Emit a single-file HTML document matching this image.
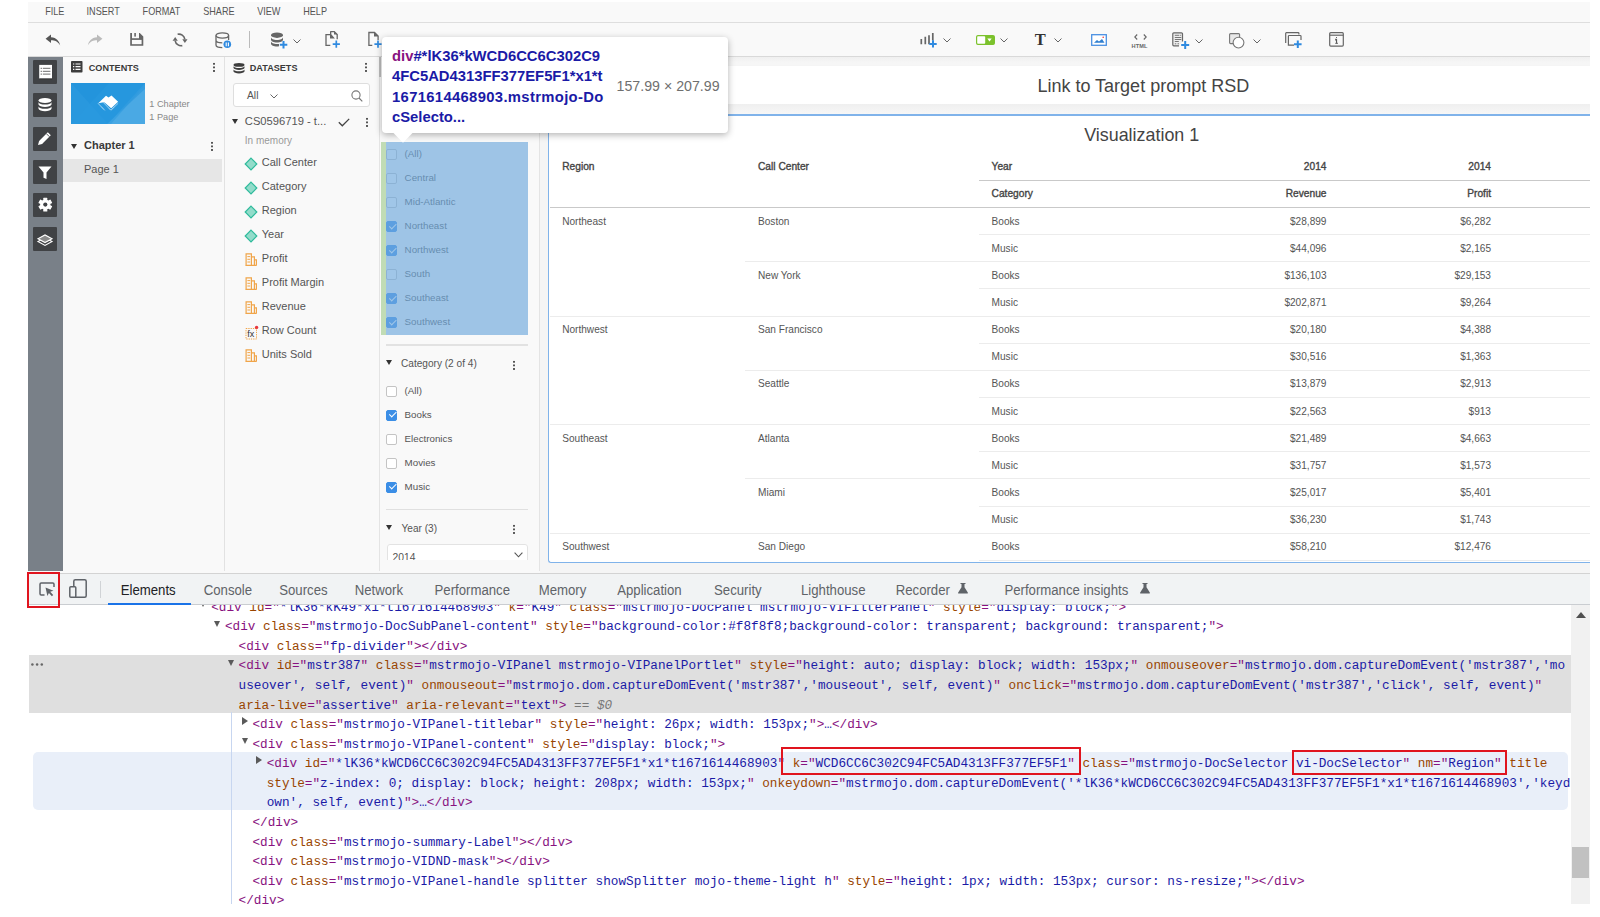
<!DOCTYPE html>
<html><head><meta charset="utf-8">
<style>
*{box-sizing:border-box}
html,body{margin:0;padding:0}
body{width:1600px;height:917px;position:relative;overflow:hidden;background:#fff;font-family:"Liberation Sans",sans-serif;color:#333}
.a{position:absolute}
#app{position:absolute;left:28px;top:2px;width:1562px;height:571px;background:#f9f9f9;overflow:hidden}
#menu{position:absolute;left:0;top:0;width:1562px;height:20px;background:#f9f9f9;border-bottom:1px solid #dcdcdc}
#menu span{position:absolute;top:5px;font-size:9px;color:#555;letter-spacing:0}
#tb{position:absolute;left:0;top:21px;width:1562px;height:33px;background:#f9f9f9;border-bottom:1px solid #d6d6d6}
#lbar{position:absolute;left:0;top:54px;width:35px;height:517px;background:#798088}
.lic{position:absolute;left:32.8px;width:24px;height:24px;background:#404245;border-radius:1px}
#contents{position:absolute;left:35px;top:54px;width:161px;height:517px;background:#f9f9f9;border-right:1px solid #e0e0e0}
#datasets{position:absolute;left:196px;top:54px;width:155px;height:517px;background:#f9f9f9;border-right:1px solid #e2e2e2}
#filter{position:absolute;left:351px;top:54px;width:160px;height:517px;background:#f9f9f9;border-right:1px solid #e6e6e6}
#canvas{position:absolute;left:511px;top:54px;width:1051px;height:517px;background:#f3f3f3}
.ph{position:absolute;font-size:9.1px;font-weight:bold;color:#3a3a3a;line-height:9px}
.kb{position:absolute;width:2px;height:10px;background:radial-gradient(circle,#555 0.95px,transparent 1.05px) 0 0/2px 3.6px}
.dsi{position:absolute;left:20px;font-size:11.3px;color:#444}
.fi{position:absolute;font-size:9.75px;color:#555;line-height:11px}
.cb{position:absolute;width:10.8px;height:10.8px;border:1px solid #c4c4c4;border-radius:2px;background:#fff}
.cb.on{background:#3b8ee6;border-color:#3b8ee6}
.cb.on:after{content:"";position:absolute;left:3.3px;top:-0.4px;width:2.6px;height:5.6px;border:solid #fff;border-width:0 1.3px 1.3px 0;transform:rotate(45deg)}
#devtabs{position:absolute;left:28px;top:573px;width:1562px;height:32px;z-index:2;background:#f1f3f4;border-top:1px solid #d3d3d3;border-bottom:1px solid #cacdd1}
#devtabs span{position:absolute;top:8.5px;font-size:13.2px;color:#5f6368;transform:scaleY(1.12);transform-origin:0 12px}
#code{position:absolute;left:28px;top:605px;width:1562px;height:300px;background:#fff;overflow:hidden}
.ln{position:absolute;left:0;height:19.4px;line-height:19.4px;white-space:pre;font-family:"Liberation Mono",monospace;font-size:12.71px;color:#1a1aa6}
.t{color:#881280}.n{color:#994500}.v{color:#1a1aa6}
.td{position:absolute;font-size:10.1px;color:#555;line-height:13px;white-space:nowrap}
.th{position:absolute;font-size:10.2px;font-weight:normal;-webkit-text-stroke:0.35px #444;color:#444;line-height:12px;white-space:nowrap}
.g{color:#777;font-style:italic}
.tri{position:absolute;width:0;height:0}
.tri.dn{border-left:3.9px solid transparent;border-right:3.9px solid transparent;border-top:6.2px solid #5a5a5a}
.tri.rt{border-top:4.1px solid transparent;border-bottom:4.1px solid transparent;border-left:6.2px solid #5a5a5a}
.mn{position:absolute;top:7.3px;font-size:9.1px;color:#555;line-height:10px;transform:scaleY(1.12);transform-origin:0 8.5px}
.lic svg{display:block}
</style></head><body>
<!--APP-->
<!-- frame -->
<div class="a" style="left:28px;top:2px;width:1562px;height:571px;background:#f9f9f9"></div>
<div class="a" style="left:28px;top:22px;width:1562px;height:1px;background:#dedede"></div>
<div class="a" style="left:28px;top:56px;width:1562px;height:1px;background:#d9d9d9"></div>
<!-- menu -->
<div class="mn" style="left:45.2px">FILE</div>
<div class="mn" style="left:86.6px">INSERT</div>
<div class="mn" style="left:142.6px">FORMAT</div>
<div class="mn" style="left:203.2px">SHARE</div>
<div class="mn" style="left:257.2px">VIEW</div>
<div class="mn" style="left:303.2px">HELP</div>
<!-- toolbar left -->
<svg class="a" style="left:45px;top:34px" width="16" height="12" viewBox="0 0 16 12"><path d="M6 0.5L0.6 4.8 6 9V6.3c3.8 0 6.8 1.2 9.2 5.2C14.4 7.2 11.6 3.6 6 3.2z" fill="#555"/></svg>
<svg class="a" style="left:87px;top:34px" width="16" height="12" viewBox="0 0 16 12"><path d="M10 0.5L15.4 4.8 10 9V6.3c-3.8 0-6.8 1.2-9.2 5.2C1.6 7.2 4.4 3.6 10 3.2z" fill="#bbb"/></svg>
<svg class="a" style="left:130px;top:33px" width="14" height="13" viewBox="0 0 14 13"><path d="M0.2 0H2V5.2H9V0H9.8L13.3 3.5V12.8H0.2z" fill="#666"/><rect x="4.3" y="0" width="1.6" height="3.6" fill="#666"/><rect x="1.9" y="6.9" width="9.7" height="4.3" fill="#f9f9f9"/></svg>
<svg class="a" style="left:172px;top:33px" width="16" height="14" viewBox="0 0 16 14"><path d="M5.6 1.3A6 6 0 0 1 12.8 6.2" fill="none" stroke="#666" stroke-width="1.6"/><path d="M10.3 6.2h5.2l-2.6 3.7z" fill="#666"/><path d="M10.3 12.6A6 6 0 0 1 3.2 7.8" fill="none" stroke="#666" stroke-width="1.6"/><path d="M0.6 7.8h5.2L3.2 4.1z" fill="#666"/></svg>
<svg class="a" style="left:215px;top:32px" width="17" height="17" viewBox="0 0 17 17"><ellipse cx="7.3" cy="3.5" rx="6.3" ry="2.6" fill="none" stroke="#666" stroke-width="1.3"/><path d="M1 3.5v9.5c0 1.4 2.8 2.6 6.3 2.6M13.6 3.5v4.5M1 8.2c0 1.4 2.8 2.6 6.3 2.6" fill="none" stroke="#666" stroke-width="1.3"/><circle cx="12.3" cy="12.3" r="3.8" fill="#2f8ae0"/><path d="M11.2 10.4v3.8M13.4 10.4v3.8" stroke="#fff" stroke-width="1.1"/></svg>
<div class="a" style="left:249px;top:31px;width:1px;height:17px;background:#bbb"></div>
<svg class="a" style="left:270px;top:32px" width="18" height="17" viewBox="0 0 18 17"><ellipse cx="7" cy="3.2" rx="6" ry="2.7" fill="#666"/><path d="M1 5.3c0 1.5 2.7 2.7 6 2.7s6-1.2 6-2.7v2.4c0 1.5-2.7 2.7-6 2.7s-6-1.2-6-2.7zM1 9.3c0 1.5 2.7 2.7 6 2.7 0.7 0 1.4 0 2-.1v2.4c-.6.1-1.3.2-2 .2-3.3 0-6-1.2-6-2.7z" fill="#666"/><path d="M13.5 9v7.5M9.8 12.7h7.5" stroke="#2f8ae0" stroke-width="2"/></svg>
<svg class="a" style="left:293px;top:38.5px" width="8" height="5" viewBox="0 0 8 5"><path d="M0.5 0.5L4 4 7.5 0.5" fill="none" stroke="#666" stroke-width="1"/></svg>
<svg class="a" style="left:325px;top:31px" width="16" height="18" viewBox="0 0 16 18"><path d="M5.3 14.4H1V3.6h4" fill="none" stroke="#666" stroke-width="1.3"/><path d="M5.6 0.6h3.6l3 3v4.6" fill="none" stroke="#666" stroke-width="1.3"/><path d="M5 0.3h1.3v3l3.6 4.2H5z" fill="#666"/><path d="M9 0.3l3.3 3.3H9z" fill="#666"/><path d="M11.3 9.6v7.2M7.7 13.2h7.2" stroke="#2f8ae0" stroke-width="1.7"/></svg>
<svg class="a" style="left:368px;top:31px" width="16" height="18" viewBox="0 0 16 18"><path d="M4.3 14.4H0.9V1.5h5.6l3.6 3.6v4" fill="none" stroke="#666" stroke-width="1.3"/><path d="M6 1.2l4.4 4.4H6z" fill="#666"/><path d="M10 9.6v7.2M6.4 13.2h7.2" stroke="#2f8ae0" stroke-width="1.7"/></svg>
<!-- toolbar right -->
<svg class="a" style="left:920px;top:33px" width="21" height="15" viewBox="0 0 21 15"><path d="M1.3 6v5.2M5.3 3.8v7.4M9 2.2v9M12.8 0v7.5" stroke="#666" stroke-width="1.7"/><path d="M13 7.2v7.4M9.3 10.9h7.4" stroke="#2f8ae0" stroke-width="2"/></svg>
<svg class="a" style="left:942.5px;top:37.5px" width="8" height="5" viewBox="0 0 8 5"><path d="M0.5 0.5L4 4 7.5 0.5" fill="none" stroke="#666" stroke-width="1"/></svg>
<svg class="a" style="left:976px;top:35px" width="19" height="10" viewBox="0 0 19 10"><rect x="0.6" y="0.6" width="17.8" height="8.8" rx="1.5" fill="#7cc22d" stroke="#7cc22d" stroke-width="1.2"/><rect x="1.2" y="1.2" width="8" height="7.6" rx="0.8" fill="#fff"/><path d="M11.3 3.6h4.4L13.5 6.4z" fill="#fff"/></svg>
<svg class="a" style="left:999.5px;top:37.5px" width="8" height="5" viewBox="0 0 8 5"><path d="M0.5 0.5L4 4 7.5 0.5" fill="none" stroke="#666" stroke-width="1"/></svg>
<div class="a" style="left:1034.7px;top:31px;font-family:'Liberation Serif',serif;font-size:16.5px;font-weight:bold;color:#333;line-height:18px">T</div>
<svg class="a" style="left:1054px;top:37.5px" width="8" height="5" viewBox="0 0 8 5"><path d="M0.5 0.5L4 4 7.5 0.5" fill="none" stroke="#666" stroke-width="1"/></svg>
<svg class="a" style="left:1090.5px;top:33.5px" width="16" height="12" viewBox="0 0 16 12"><rect x="0.7" y="0.7" width="14.6" height="10.6" fill="#fff" stroke="#4a90e2" stroke-width="1.3"/><path d="M3 8.8l3-2.8 2 1.5 3-2.5 2.5 3.8z" fill="#2f7fd0"/><circle cx="12.2" cy="3.2" r="0.8" fill="#e33"/></svg>
<svg class="a" style="left:1133.5px;top:34px" width="13" height="6" viewBox="0 0 13 6"><path d="M3.2 0.5L0.8 3 3.2 5.5M9.8 0.5L12.2 3 9.8 5.5" fill="none" stroke="#666" stroke-width="1.1"/></svg>
<div class="a" style="left:1131.5px;top:42.5px;font-size:5.6px;font-weight:bold;color:#666;line-height:6px;letter-spacing:0.1px">HTML</div>
<svg class="a" style="left:1172px;top:32px" width="18" height="17" viewBox="0 0 18 17"><path d="M10.5 9.5V1.8c0-.6-.4-1-1-1H1.8c-.6 0-1 .4-1 1v11c0 .6.4 1 1 1H7" fill="#eee" stroke="#666" stroke-width="1.2"/><path d="M2.8 3.3h4.5M8.2 3.3h1M2.8 5.5h6.5M2.8 7.5h6.5M2.8 9.5h4M2.8 11.8h1.5M5.5 11.8h1.5" stroke="#777" stroke-width="1"/><path d="M13.2 9v8M9.2 13h8" stroke="#2f8ae0" stroke-width="2"/></svg>
<svg class="a" style="left:1195px;top:38.5px" width="8" height="5" viewBox="0 0 8 5"><path d="M0.5 0.5L4 4 7.5 0.5" fill="none" stroke="#666" stroke-width="1"/></svg>
<svg class="a" style="left:1228.5px;top:32.5px" width="16" height="16" viewBox="0 0 16 16"><rect x="0.6" y="0.6" width="10" height="10" rx="1" fill="#e8e8e8" stroke="#777" stroke-width="1.1"/><circle cx="9.5" cy="9.6" r="5.4" fill="#fff" stroke="#777" stroke-width="1.1"/></svg>
<svg class="a" style="left:1252.5px;top:38.5px" width="8" height="5" viewBox="0 0 8 5"><path d="M0.5 0.5L4 4 7.5 0.5" fill="none" stroke="#666" stroke-width="1"/></svg>
<svg class="a" style="left:1285px;top:32px" width="18" height="16" viewBox="0 0 18 16"><path d="M0.7 11V1.4c0-.4.3-.7.7-.7h11.8c.4 0 .7.3.7.7v1" fill="none" stroke="#666" stroke-width="1.2"/><path d="M9 13.2H3.4V4.2c0-.4.3-.7.7-.7h11.2c.4 0 .7.3.7.7V8" fill="none" stroke="#666" stroke-width="1.2"/><path d="M12.8 8.5v7.5M9 12.2h7.6" stroke="#2f8ae0" stroke-width="2"/></svg>
<svg class="a" style="left:1329px;top:32px" width="15" height="15" viewBox="0 0 15 15"><rect x="0.7" y="0.7" width="13.6" height="13.4" rx="1" fill="none" stroke="#666" stroke-width="1.2"/><path d="M0.7 3.2h13.6" stroke="#666" stroke-width="1.2"/><path d="M7.5 5v0.9M6.3 7.2h1.3v4M6.3 11.3h2.6" stroke="#555" stroke-width="1"/></svg>
<!-- left bar -->
<div class="a" style="left:28px;top:57px;width:35px;height:514px;background:#798088"></div>
<div class="lic" style="top:60px"><svg width="24" height="24" viewBox="0 0 24 24"><rect x="6.2" y="4.9" width="12.8" height="13.6" fill="#fff"/><path d="M6.6 19h12.6" stroke="#2b2b2b" stroke-width="0.8"/><path d="M7.6 8.3h1.6M10 8.3h7.4M7.6 11.3h1.6M10 11.3h7.4M7.6 14.1h1.6M10 14.1h7.4" stroke="#8a8a8a" stroke-width="1.2"/></svg></div>
<div class="lic" style="top:93px"><svg width="24" height="24" viewBox="0 0 24 24"><ellipse cx="12" cy="7.5" rx="6.5" ry="2.6" fill="#fff"/><path d="M5.5 9.2c.5 1.4 3.2 2.4 6.5 2.4s6-1 6.5-2.4v2.4c-.5 1.4-3.2 2.4-6.5 2.4s-6-1-6.5-2.4zM5.5 13.4c.5 1.4 3.2 2.4 6.5 2.4s6-1 6.5-2.4v2.4c-.5 1.4-3.2 2.4-6.5 2.4s-6-1-6.5-2.4z" fill="#fff"/></svg></div>
<div class="lic" style="top:127px"><svg width="24" height="24" viewBox="0 0 24 24"><path d="M14.8 5.3l3 3-8.7 8.7-4.1 1.1 1.1-4.1z" fill="#fff"/><path d="M13.4 6.7l3 3" stroke="#404245" stroke-width="0.9"/></svg></div>
<div class="lic" style="top:160px"><svg width="24" height="24" viewBox="0 0 24 24"><path d="M5.5 6.5h13l-5 6v6.5l-3-1.2v-5.3z" fill="#fff"/></svg></div>
<div class="lic" style="top:193.4px"><svg width="24" height="24" viewBox="0 0 24 24"><path d="M10.96 7.20 L10.84 5.27 L13.76 5.27 L13.64 7.20 L15.44 8.24 L17.05 7.17 L18.52 9.70 L16.78 10.57 L16.78 12.63 L18.52 13.50 L17.05 16.03 L15.44 14.96 L13.64 16.00 L13.76 17.93 L10.84 17.93 L10.96 16.00 L9.16 14.96 L7.55 16.03 L6.08 13.50 L7.82 12.63 L7.82 10.57 L6.08 9.70 L7.55 7.17 L9.16 8.24z" fill="#fff" stroke="#fff" stroke-width="1.2" stroke-linejoin="round"/><circle cx="12.3" cy="11.6" r="2.1" fill="#404245"/></svg></div>
<div class="lic" style="top:227px"><svg width="24" height="24" viewBox="0 0 24 24"><path d="M5 14.6L12 10.8 19 14.6 12 18.4z" fill="none" stroke="#fff" stroke-width="1.1"/><path d="M5 11.8L12 8 19 11.8 12 15.6z" fill="#8a8a8a" stroke="#fff" stroke-width="1.1"/></svg></div>

<!-- contents panel -->
<div class="a" style="left:224px;top:57px;width:1px;height:514px;background:#e2e2e2"></div>
<svg class="a" style="left:71px;top:61px" width="12" height="12" viewBox="0 0 12 12"><rect x="0" y="0" width="11.5" height="11.5" rx="0.8" fill="#3d3d3d"/><path d="M2 3h1.3M4.5 3h5M2 5.7h1.3M4.5 5.7h5M2 8.4h1.3M4.5 8.4h5" stroke="#f9f9f9" stroke-width="1.2"/></svg>
<div class="ph" style="left:88.8px;top:64.3px">CONTENTS</div>
<div class="kb" style="left:213px;top:62.3px"></div>
<div class="a" style="left:71px;top:82.8px;width:74px;height:41px;overflow:hidden;background:#2394dc">
 <svg width="74" height="41" viewBox="0 0 74 41" style="display:block"><path d="M0 0l37 41H0z" fill="#2f9be0" opacity="0.55"/><path d="M74 6L36 41h38z" fill="#4aaae6" opacity="0.8"/><path d="M74 0v41L37 41z" fill="#5aafe6" opacity="0.35"/><path d="M0 41L38 0h36v2L40 41z" fill="#2a99e0" opacity="0.5"/>
 <path d="M27.3 20.2L35 12.8l2.5 1.6 3-2 6.6 6.4L40.2 25.2 33.6 19.4H31.2z" fill="#fff"/><path d="M27.3 20.6L34 27.6M33.2 20.4l6.7 6.9 7.2-7" fill="none" stroke="#fff" stroke-width="0.9" stroke-dasharray="1.1 0.5"/></svg>
</div>
<div class="a" style="left:149.3px;top:98.3px;font-size:9.2px;color:#888;line-height:13px">1 Chapter<br>1 Page</div>
<div class="tri dn" style="left:70.5px;top:144.3px;border-left-width:3.5px;border-right-width:3.5px;border-top-width:5px;border-top-color:#333"></div>
<div class="a" style="left:84px;top:139px;font-size:11px;font-weight:bold;color:#3a3a3a;line-height:12px">Chapter 1</div>
<div class="kb" style="left:210.8px;top:141px"></div>
<div class="a" style="left:63px;top:158.8px;width:159px;height:23px;background:#e6e6e6"></div>
<div class="a" style="left:84px;top:162.5px;font-size:11px;color:#555;line-height:12px">Page 1</div>
<!-- datasets panel -->
<svg class="a" style="left:232.5px;top:62.5px" width="12" height="11" viewBox="0 0 12 11"><ellipse cx="6" cy="1.9" rx="5.5" ry="1.9" fill="#3d3d3d"/><path d="M0.5 3.2c.4 1 2.6 1.8 5.5 1.8s5.1-.8 5.5-1.8v1.9c-.4 1-2.6 1.8-5.5 1.8S.9 6.1.5 5.1zM.5 6.4c.4 1 2.6 1.8 5.5 1.8s5.1-.8 5.5-1.8v2.2c-.4 1-2.6 1.8-5.5 1.8S.9 9.6.5 8.6z" fill="#3d3d3d"/></svg>
<div class="ph" style="left:249.8px;top:64.3px">DATASETS</div>
<div class="kb" style="left:365px;top:62.3px"></div>
<div class="a" style="left:233.4px;top:83.2px;width:136.2px;height:24.1px;background:#fff;border:1px solid #dedede;border-radius:3px"></div>
<div class="a" style="left:247px;top:89.9px;font-size:10.3px;color:#555;line-height:11px">All</div>
<svg class="a" style="left:269.8px;top:93.8px" width="8" height="5" viewBox="0 0 8 5"><path d="M0.5 0.5L4 4 7.5 0.5" fill="none" stroke="#666" stroke-width="1"/></svg>
<svg class="a" style="left:351px;top:90px" width="12" height="12" viewBox="0 0 12 12"><circle cx="5" cy="5" r="4.1" fill="none" stroke="#777" stroke-width="1.1"/><path d="M8 8l3.3 3.3" stroke="#777" stroke-width="1.2"/></svg>
<div class="tri dn" style="left:231.5px;top:118.5px;border-left-width:3.4px;border-right-width:3.4px;border-top-width:5px;border-top-color:#333"></div>
<div class="a" style="left:244.8px;top:114.5px;font-size:11.2px;color:#555;line-height:12px">CS0596719 - t...</div>
<svg class="a" style="left:338px;top:117.5px" width="12" height="9" viewBox="0 0 12 9"><path d="M0.8 4.3l3.5 3.5L11.2 0.9" fill="none" stroke="#444" stroke-width="1.3"/></svg>
<div class="kb" style="left:365.5px;top:116.5px"></div>
<div class="a" style="left:244.8px;top:135px;font-size:10px;color:#999;line-height:11px">In memory</div>
<svg class="a" style="left:243.5px;top:156.7px" width="14" height="14" viewBox="0 0 14 14"><path d="M7 1.2L12.8 7 7 12.8 1.2 7z" fill="#92dcca" stroke="#2fbb9c" stroke-width="1.2"/></svg>
<div class="a" style="left:261.8px;top:156.1px;font-size:11px;color:#555;line-height:13px">Call Center</div>
<svg class="a" style="left:243.5px;top:180.7px" width="14" height="14" viewBox="0 0 14 14"><path d="M7 1.2L12.8 7 7 12.8 1.2 7z" fill="#92dcca" stroke="#2fbb9c" stroke-width="1.2"/></svg>
<div class="a" style="left:261.8px;top:180.1px;font-size:11px;color:#555;line-height:13px">Category</div>
<svg class="a" style="left:243.5px;top:204.7px" width="14" height="14" viewBox="0 0 14 14"><path d="M7 1.2L12.8 7 7 12.8 1.2 7z" fill="#92dcca" stroke="#2fbb9c" stroke-width="1.2"/></svg>
<div class="a" style="left:261.8px;top:204.1px;font-size:11px;color:#555;line-height:13px">Region</div>
<svg class="a" style="left:243.5px;top:228.7px" width="14" height="14" viewBox="0 0 14 14"><path d="M7 1.2L12.8 7 7 12.8 1.2 7z" fill="#92dcca" stroke="#2fbb9c" stroke-width="1.2"/></svg>
<div class="a" style="left:261.8px;top:228.1px;font-size:11px;color:#555;line-height:13px">Year</div>
<svg class="a" style="left:244.5px;top:253.1px" width="12" height="13" viewBox="0 0 12 13"><path d="M1.1 12.3V0.9h5.3v11.4M6.4 3.9h3v8.4M9.4 6.9h2v5.4M0.4 12.3h11.3" fill="none" stroke="#f0a54a" stroke-width="1.2"/><path d="M2.4 3.6h2.8M2.4 6.3h2.8M2.4 9h2.8" stroke="#f0a54a" stroke-width="1"/></svg>
<div class="a" style="left:261.8px;top:252.1px;font-size:11px;color:#555;line-height:13px">Profit</div>
<svg class="a" style="left:244.5px;top:277.1px" width="12" height="13" viewBox="0 0 12 13"><path d="M1.1 12.3V0.9h5.3v11.4M6.4 3.9h3v8.4M9.4 6.9h2v5.4M0.4 12.3h11.3" fill="none" stroke="#f0a54a" stroke-width="1.2"/><path d="M2.4 3.6h2.8M2.4 6.3h2.8M2.4 9h2.8" stroke="#f0a54a" stroke-width="1"/></svg>
<div class="a" style="left:261.8px;top:276.1px;font-size:11px;color:#555;line-height:13px">Profit Margin</div>
<svg class="a" style="left:244.5px;top:301.1px" width="12" height="13" viewBox="0 0 12 13"><path d="M1.1 12.3V0.9h5.3v11.4M6.4 3.9h3v8.4M9.4 6.9h2v5.4M0.4 12.3h11.3" fill="none" stroke="#f0a54a" stroke-width="1.2"/><path d="M2.4 3.6h2.8M2.4 6.3h2.8M2.4 9h2.8" stroke="#f0a54a" stroke-width="1"/></svg>
<div class="a" style="left:261.8px;top:300.1px;font-size:11px;color:#555;line-height:13px">Revenue</div>
<svg class="a" style="left:243.5px;top:324.7px" width="15" height="15" viewBox="0 0 15 15"><rect x="2" y="3.5" width="10.5" height="10.5" fill="none" stroke="#f0a54a" stroke-width="1" stroke-dasharray="1.3 1"/><text x="3.2" y="12.2" font-family="Liberation Sans" font-size="9" fill="#333">fx</text><circle cx="12.6" cy="2.4" r="1.7" fill="#e8383d"/></svg>
<div class="a" style="left:261.8px;top:324.1px;font-size:11px;color:#555;line-height:13px">Row Count</div>
<svg class="a" style="left:244.5px;top:349.1px" width="12" height="13" viewBox="0 0 12 13"><path d="M1.1 12.3V0.9h5.3v11.4M6.4 3.9h3v8.4M9.4 6.9h2v5.4M0.4 12.3h11.3" fill="none" stroke="#f0a54a" stroke-width="1.2"/><path d="M2.4 3.6h2.8M2.4 6.3h2.8M2.4 9h2.8" stroke="#f0a54a" stroke-width="1"/></svg>
<div class="a" style="left:261.8px;top:348.1px;font-size:11px;color:#555;line-height:13px">Units Sold</div>


<div class="a" style="left:379.3px;top:57px;width:1px;height:514px;background:#e4e4e4"></div>
<div class="a" style="left:379.1px;top:56.5px;width:2.4px;height:20.2px;background:#bdbdbd"></div>
<div class="a" style="left:539.4px;top:57px;width:1px;height:514px;background:#e4e4e4"></div>
<div class="cb" style="left:386.3px;top:149.0px"></div>
<div class="fi" style="left:404.6px;top:147.9px">(All)</div>
<div class="cb" style="left:386.3px;top:173.0px"></div>
<div class="fi" style="left:404.6px;top:171.9px">Central</div>
<div class="cb" style="left:386.3px;top:197.0px"></div>
<div class="fi" style="left:404.6px;top:195.9px">Mid-Atlantic</div>
<div class="cb on" style="left:386.3px;top:221.0px"></div>
<div class="fi" style="left:404.6px;top:219.9px">Northeast</div>
<div class="cb on" style="left:386.3px;top:245.0px"></div>
<div class="fi" style="left:404.6px;top:243.9px">Northwest</div>
<div class="cb" style="left:386.3px;top:269.0px"></div>
<div class="fi" style="left:404.6px;top:267.9px">South</div>
<div class="cb on" style="left:386.3px;top:293.0px"></div>
<div class="fi" style="left:404.6px;top:291.9px">Southeast</div>
<div class="cb on" style="left:386.3px;top:317.0px"></div>
<div class="fi" style="left:404.6px;top:315.9px">Southwest</div>
<div class="a" style="left:381.2px;top:142px;width:4.8px;height:192.7px;background:rgba(147,196,125,0.55)"></div>
<div class="a" style="left:386px;top:142px;width:141.9px;height:192.7px;background:rgba(111,168,220,0.66)"></div>
<div class="a" style="left:386px;top:344.4px;width:141.8px;height:1.2px;background:#e2e2e2"></div>
<div class="tri dn" style="left:386.4px;top:360.3px;border-left-width:3.5px;border-right-width:3.5px;border-top-width:5px;border-top-color:#333"></div>
<div class="a" style="left:401px;top:358.2px;font-size:10.1px;color:#555;line-height:11px">Category (2 of 4)</div>
<div class="kb" style="left:513px;top:359.5px"></div>
<div class="cb" style="left:386.3px;top:385.8px"></div>
<div class="fi" style="left:404.6px;top:384.7px">(All)</div>
<div class="cb on" style="left:386.3px;top:409.8px"></div>
<div class="fi" style="left:404.6px;top:408.7px">Books</div>
<div class="cb" style="left:386.3px;top:433.8px"></div>
<div class="fi" style="left:404.6px;top:432.7px">Electronics</div>
<div class="cb" style="left:386.3px;top:457.8px"></div>
<div class="fi" style="left:404.6px;top:456.7px">Movies</div>
<div class="cb on" style="left:386.3px;top:481.8px"></div>
<div class="fi" style="left:404.6px;top:480.7px">Music</div>
<div class="a" style="left:386px;top:509px;width:141.8px;height:1.2px;background:#e0e0e0"></div>
<div class="tri dn" style="left:386.4px;top:524.8px;border-left-width:3.5px;border-right-width:3.5px;border-top-width:5px;border-top-color:#333"></div>
<div class="a" style="left:401.5px;top:522.5px;font-size:10.1px;color:#555;line-height:11px">Year (3)</div>
<div class="kb" style="left:513px;top:524px"></div>
<div class="a" style="left:386.6px;top:543.9px;width:141.2px;height:16.1px;overflow:hidden"><div class="a" style="left:0;top:0;width:141.2px;height:24px;background:#fff;border:1px solid #e3e3e3;border-radius:3px"></div><div class="a" style="left:6px;top:8.3px;font-size:10.3px;color:#555;line-height:11px">2014</div><svg class="a" style="left:127.4px;top:8.3px" width="9" height="6" viewBox="0 0 9 6"><path d="M0.6 0.6L4.5 4.8 8.4 0.6" fill="none" stroke="#555" stroke-width="1.1"/></svg></div>

<div class="a" style="left:540.4px;top:57px;width:1049.6px;height:516px;background:#f5f5f5"></div>
<div class="a" style="left:540.4px;top:57px;width:1049.6px;height:8px;background:linear-gradient(#f0f0f0,#f6f6f6 70%)"></div>
<div class="a" style="left:548px;top:65.5px;width:1042px;height:38.6px;background:#fff"></div>
<div class="a" style="left:1037.4px;top:76px;font-size:18px;color:#444;line-height:20px;white-space:nowrap">Link to Target prompt RSD</div>
<div class="a" style="left:548px;top:104.1px;width:1042px;height:10px;background:linear-gradient(#efefef,#f7f7f7)"></div>
<div class="a" style="left:548.1px;top:113.9px;width:1041.9px;height:448.8px;background:#fff;border:1.7px solid #80b3ea;border-top-width:2px;border-right:0;border-radius:3px 0 0 3px"></div>
<div class="a" style="left:1084.2px;top:124.6px;font-size:17.9px;color:#444;line-height:20px;white-space:nowrap">Visualization 1</div>
<div class="th" style="left:562.2px;top:160.8px">Region</div>
<div class="th" style="left:758.0px;top:160.8px">Call Center</div>
<div class="th" style="left:991.6px;top:160.8px">Year</div>
<div class="th" style="left:1206.5px;top:160.8px;width:120px;text-align:right">2014</div>
<div class="th" style="left:1371.0px;top:160.8px;width:120px;text-align:right">2014</div>
<div class="a" style="left:979px;top:179.6px;width:611px;height:1px;background:#c9c9c9"></div>
<div class="th" style="left:991.6px;top:188.4px">Category</div>
<div class="th" style="left:1206.5px;top:188.4px;width:120px;text-align:right">Revenue</div>
<div class="th" style="left:1371.0px;top:188.4px;width:120px;text-align:right">Profit</div>
<div class="a" style="left:549.7px;top:206.8px;width:1040.3px;height:1px;background:#c9c9c9"></div>
<div class="td" style="left:562.2px;top:214.5px">Northeast</div>
<div class="td" style="left:758px;top:214.5px">Boston</div>
<div class="td" style="left:991.6px;top:214.5px">Books</div>
<div class="td" style="left:1206.5px;top:214.5px;width:120px;text-align:right">$28,899</div>
<div class="td" style="left:1371px;top:214.5px;width:120px;text-align:right">$6,282</div>
<div class="td" style="left:991.6px;top:241.6px">Music</div>
<div class="td" style="left:1206.5px;top:241.6px;width:120px;text-align:right">$44,096</div>
<div class="td" style="left:1371px;top:241.6px;width:120px;text-align:right">$2,165</div>
<div class="td" style="left:758px;top:268.8px">New York</div>
<div class="td" style="left:991.6px;top:268.8px">Books</div>
<div class="td" style="left:1206.5px;top:268.8px;width:120px;text-align:right">$136,103</div>
<div class="td" style="left:1371px;top:268.8px;width:120px;text-align:right">$29,153</div>
<div class="td" style="left:991.6px;top:295.9px">Music</div>
<div class="td" style="left:1206.5px;top:295.9px;width:120px;text-align:right">$202,871</div>
<div class="td" style="left:1371px;top:295.9px;width:120px;text-align:right">$9,264</div>
<div class="td" style="left:562.2px;top:323.1px">Northwest</div>
<div class="td" style="left:758px;top:323.1px">San Francisco</div>
<div class="td" style="left:991.6px;top:323.1px">Books</div>
<div class="td" style="left:1206.5px;top:323.1px;width:120px;text-align:right">$20,180</div>
<div class="td" style="left:1371px;top:323.1px;width:120px;text-align:right">$4,388</div>
<div class="td" style="left:991.6px;top:350.2px">Music</div>
<div class="td" style="left:1206.5px;top:350.2px;width:120px;text-align:right">$30,516</div>
<div class="td" style="left:1371px;top:350.2px;width:120px;text-align:right">$1,363</div>
<div class="td" style="left:758px;top:377.3px">Seattle</div>
<div class="td" style="left:991.6px;top:377.3px">Books</div>
<div class="td" style="left:1206.5px;top:377.3px;width:120px;text-align:right">$13,879</div>
<div class="td" style="left:1371px;top:377.3px;width:120px;text-align:right">$2,913</div>
<div class="td" style="left:991.6px;top:404.5px">Music</div>
<div class="td" style="left:1206.5px;top:404.5px;width:120px;text-align:right">$22,563</div>
<div class="td" style="left:1371px;top:404.5px;width:120px;text-align:right">$913</div>
<div class="td" style="left:562.2px;top:431.6px">Southeast</div>
<div class="td" style="left:758px;top:431.6px">Atlanta</div>
<div class="td" style="left:991.6px;top:431.6px">Books</div>
<div class="td" style="left:1206.5px;top:431.6px;width:120px;text-align:right">$21,489</div>
<div class="td" style="left:1371px;top:431.6px;width:120px;text-align:right">$4,663</div>
<div class="td" style="left:991.6px;top:458.8px">Music</div>
<div class="td" style="left:1206.5px;top:458.8px;width:120px;text-align:right">$31,757</div>
<div class="td" style="left:1371px;top:458.8px;width:120px;text-align:right">$1,573</div>
<div class="td" style="left:758px;top:485.9px">Miami</div>
<div class="td" style="left:991.6px;top:485.9px">Books</div>
<div class="td" style="left:1206.5px;top:485.9px;width:120px;text-align:right">$25,017</div>
<div class="td" style="left:1371px;top:485.9px;width:120px;text-align:right">$5,401</div>
<div class="td" style="left:991.6px;top:513.0px">Music</div>
<div class="td" style="left:1206.5px;top:513.0px;width:120px;text-align:right">$36,230</div>
<div class="td" style="left:1371px;top:513.0px;width:120px;text-align:right">$1,743</div>
<div class="td" style="left:562.2px;top:540.2px">Southwest</div>
<div class="td" style="left:758px;top:540.2px">San Diego</div>
<div class="td" style="left:991.6px;top:540.2px">Books</div>
<div class="td" style="left:1206.5px;top:540.2px;width:120px;text-align:right">$58,210</div>
<div class="td" style="left:1371px;top:540.2px;width:120px;text-align:right">$12,476</div>
<div class="a" style="left:979.2px;top:234.1px;width:610.8px;height:1px;background:#ececec"></div>
<div class="a" style="left:745.2px;top:261.3px;width:844.8px;height:1px;background:#ececec"></div>
<div class="a" style="left:979.2px;top:288.4px;width:610.8px;height:1px;background:#ececec"></div>
<div class="a" style="left:549.7px;top:315.6px;width:1040.3px;height:1px;background:#ececec"></div>
<div class="a" style="left:979.2px;top:342.7px;width:610.8px;height:1px;background:#ececec"></div>
<div class="a" style="left:745.2px;top:369.8px;width:844.8px;height:1px;background:#ececec"></div>
<div class="a" style="left:979.2px;top:397.0px;width:610.8px;height:1px;background:#ececec"></div>
<div class="a" style="left:549.7px;top:424.1px;width:1040.3px;height:1px;background:#ececec"></div>
<div class="a" style="left:979.2px;top:451.3px;width:610.8px;height:1px;background:#ececec"></div>
<div class="a" style="left:745.2px;top:478.4px;width:844.8px;height:1px;background:#ececec"></div>
<div class="a" style="left:979.2px;top:505.5px;width:610.8px;height:1px;background:#ececec"></div>
<div class="a" style="left:549.7px;top:532.7px;width:1040.3px;height:1px;background:#ececec"></div>
<div class="a" style="left:979.2px;top:559.8px;width:610.8px;height:1px;background:#ececec"></div>

<!-- tooltip -->
<div class="a" style="left:382.3px;top:36.8px;width:345.8px;height:96.4px;background:#fff;border-radius:4px;box-shadow:0 2px 7px rgba(0,0,0,0.3);z-index:5"></div>
<svg class="a" style="left:391.5px;top:132px;z-index:5" width="22" height="12" viewBox="0 0 22 12"><path d="M1.5 1L11 10.8 20.5 1z" fill="#fff"/></svg>
<div class="a" style="left:392px;top:46px;font-size:14.8px;font-weight:bold;line-height:20.25px;color:#1a1aa6;z-index:6;white-space:nowrap"><span style="color:#881280">div</span>#*lK36*kWCD6CC6C302C9<br>4FC5AD4313FF377EF5F1*x1*t<br><span style="letter-spacing:0.34px">1671614468903.mstrmojo-Do</span><br>cSelecto...</div>
<div class="a" style="left:616.6px;top:78px;font-size:14.2px;line-height:16px;color:#6f6f6f;z-index:6;white-space:nowrap">157.99 × 207.99</div>


<!--/APP-->
<div id="devtabs"><span style="left:92.7px;color:#202124">Elements</span><span style="left:175.7px">Console</span><span style="left:251.2px">Sources</span><span style="left:326.7px">Network</span><span style="left:406.5px">Performance</span><span style="left:510.7px">Memory</span><span style="left:589.2px">Application</span><span style="left:686.0px">Security</span><span style="left:773.0px">Lighthouse</span><span style="left:867.7px">Recorder</span><span style="left:976.4px">Performance insights</span><svg class="a" style="left:929px;top:8px" width="12" height="12" viewBox="0 0 12 12"><path d="M3.5 1h5v1h-1v3.2l3.3 5.3c.3.5 0 1-.5 1H1.7c-.6 0-.8-.5-.5-1L4.5 5.2V2h-1z" fill="#5f6368"/></svg><svg class="a" style="left:1111px;top:8px" width="12" height="12" viewBox="0 0 12 12"><path d="M3.5 1h5v1h-1v3.2l3.3 5.3c.3.5 0 1-.5 1H1.7c-.6 0-.8-.5-.5-1L4.5 5.2V2h-1z" fill="#5f6368"/></svg><div class="a" style="left:-0.6px;top:-2.2px;width:32.2px;height:35.8px;border:2px solid #e0141e;z-index:3"></div><svg class="a" style="left:11px;top:7.5px" width="16" height="15" viewBox="0 0 16 15"><path d="M5.5 13H2.2C1.5 13 1 12.5 1 11.8V2.2C1 1.5 1.5 1 2.2 1h11.6c.7 0 1.2.5 1.2 1.2V5" fill="none" stroke="#5f6368" stroke-width="1.5"/><path d="M6.5 5.5l8 3.2-3.3 1 3 3.3-1.3 1.2-3-3.3-1.5 3z" fill="#5f6368"/></svg><svg class="a" style="left:41px;top:5.2px" width="18" height="19" viewBox="0 0 18 19"><rect x="4.8" y="0.8" width="12.4" height="17.4" rx="1.5" fill="none" stroke="#5f6368" stroke-width="1.5"/><rect x="0.8" y="7.8" width="6" height="10.4" rx="1" fill="#f1f3f4" stroke="#5f6368" stroke-width="1.5"/></svg><div class="a" style="left:72px;top:7px;width:1px;height:17px;background:#d0d3d6"></div><div class="a" style="left:79.8px;top:29px;width:83px;height:2px;background:#1a73e8"></div></div>
<div id="code"><div class="a" style="left:-28px;top:-605px;width:1600px;height:917px">
<div class="a" style="left:29px;top:655px;width:1542px;height:57.5px;background:#dfdfdf"></div>
<div class="a" style="left:32.5px;top:752.4px;width:1535px;height:57.7px;background:#e9eff9;border-radius:5px"></div>
<div class="a" style="left:230.5px;top:712.4px;width:1px;height:191.5px;background:#c7d6f0"></div>
<div class="a" style="left:780.6px;top:747px;width:300.7px;height:27.6px;border:2px solid #e0141e;z-index:2"></div>
<div class="a" style="left:1292.3px;top:750.3px;width:214.3px;height:25.2px;border:2px solid #e0141e;z-index:2"></div>
<svg class="a" style="left:30px;top:662px" width="16" height="5" viewBox="0 0 16 5"><circle cx="2.4" cy="2.6" r="1.25" fill="#666"/><circle cx="7.1" cy="2.6" r="1.25" fill="#666"/><circle cx="11.8" cy="2.6" r="1.25" fill="#666"/></svg>
<div class="a" style="left:1571px;top:605px;width:19px;height:299px;background:#f1f1f1;z-index:2"></div>
<div class="a" style="left:1575.5px;top:612px;width:0;height:0;border-left:5px solid transparent;border-right:5px solid transparent;border-bottom:6px solid #505050;z-index:3"></div>
<div class="a" style="left:1572px;top:847px;width:17px;height:31px;background:#c1c1c1;z-index:3"></div>
<!--CODE-->
<div class="ln" style="left:211.2px;top:597.76px"><span class="t">&lt;div</span><span class="n"> id</span><span class="t">="</span><span class="v">*lK36*kK49*x1*t1671614468903</span><span class="t">"</span><span class="n"> k</span><span class="t">="</span><span class="v">K49</span><span class="t">"</span><span class="n"> class</span><span class="t">="</span><span class="v">mstrmojo-DocPanel mstrmojo-VIFilterPanel</span><span class="t">"</span><span class="n"> style</span><span class="t">="</span><span class="v">display: block;</span><span class="t">"</span><span class="t">&gt;</span></div>
<div class="tri dn" style="left:200.3px;top:601.4px"></div>
<div class="ln" style="left:225.0px;top:617.34px"><span class="t">&lt;div</span><span class="n"> class</span><span class="t">="</span><span class="v">mstrmojo-DocSubPanel-content</span><span class="t">"</span><span class="n"> style</span><span class="t">="</span><span class="v">background-color:#f8f8f8;background-color: transparent; background: transparent;</span><span class="t">"</span><span class="t">&gt;</span></div>
<div class="tri dn" style="left:214.1px;top:621.0px"></div>
<div class="ln" style="left:238.6px;top:636.90px"><span class="t">&lt;div</span><span class="n"> class</span><span class="t">="</span><span class="v">fp-divider</span><span class="t">"</span><span class="t">&gt;&lt;/div&gt;</span></div>
<div class="ln" style="left:238.6px;top:656.48px"><span class="t">&lt;div</span><span class="n"> id</span><span class="t">="</span><span class="v">mstr387</span><span class="t">"</span><span class="n"> class</span><span class="t">="</span><span class="v">mstrmojo-VIPanel mstrmojo-VIPanelPortlet</span><span class="t">"</span><span class="n"> style</span><span class="t">="</span><span class="v">height: auto; display: block; width: 153px;</span><span class="t">"</span><span class="n"> onmouseover</span><span class="t">="</span><span class="v">mstrmojo.dom.captureDomEvent('mstr387','mo</span></div>
<div class="tri dn" style="left:227.7px;top:660.2px"></div>
<div class="ln" style="left:238.6px;top:676.04px"><span class="v">useover', self, event)</span><span class="t">"</span><span class="n"> onmouseout</span><span class="t">="</span><span class="v">mstrmojo.dom.captureDomEvent('mstr387','mouseout', self, event)</span><span class="t">"</span><span class="n"> onclick</span><span class="t">="</span><span class="v">mstrmojo.dom.captureDomEvent('mstr387','click', self, event)</span><span class="t">"</span></div>
<div class="ln" style="left:238.6px;top:695.62px"><span class="n">aria-live</span><span class="t">="</span><span class="v">assertive</span><span class="t">"</span><span class="n"> aria-relevant</span><span class="t">="</span><span class="v">text</span><span class="t">"&gt;</span><span class="g"> == $0</span></div>
<div class="ln" style="left:252.5px;top:715.18px"><span class="t">&lt;div</span><span class="n"> class</span><span class="t">="</span><span class="v">mstrmojo-VIPanel-titlebar</span><span class="t">"</span><span class="n"> style</span><span class="t">="</span><span class="v">height: 26px; width: 153px;</span><span class="t">"</span><span class="t">&gt;</span><span class="v">…</span><span class="t">&lt;/div&gt;</span></div>
<div class="tri rt" style="left:242.2px;top:717.2px"></div>
<div class="ln" style="left:252.5px;top:734.75px"><span class="t">&lt;div</span><span class="n"> class</span><span class="t">="</span><span class="v">mstrmojo-VIPanel-content</span><span class="t">"</span><span class="n"> style</span><span class="t">="</span><span class="v">display: block;</span><span class="t">"</span><span class="t">&gt;</span></div>
<div class="tri dn" style="left:241.6px;top:738.4px"></div>
<div class="ln" style="left:266.7px;top:754.32px"><span class="t">&lt;div</span><span class="n"> id</span><span class="t">="</span><span class="v">*lK36*kWCD6CC6C302C94FC5AD4313FF377EF5F1*x1*t1671614468903</span><span class="t">"</span><span class="n"> k</span><span class="t">="</span><span class="v">WCD6CC6C302C94FC5AD4313FF377EF5F1</span><span class="t">"</span><span class="n"> class</span><span class="t">="</span><span class="v">mstrmojo-DocSelector vi-DocSelector</span><span class="t">"</span><span class="n"> nm</span><span class="t">="</span><span class="v">Region</span><span class="t">"</span><span class="n"> title</span></div>
<div class="tri rt" style="left:256.4px;top:756.3px"></div>
<div class="ln" style="left:266.7px;top:773.89px"><span class="n">style</span><span class="t">="</span><span class="v">z-index: 0; display: block; height: 208px; width: 153px;</span><span class="t">"</span><span class="n"> onkeydown</span><span class="t">="</span><span class="v">mstrmojo.dom.captureDomEvent('*lK36*kWCD6CC6C302C94FC5AD4313FF377EF5F1*x1*t1671614468903','keyd</span></div>
<div class="ln" style="left:266.7px;top:793.47px"><span class="v">own', self, event)</span><span class="t">"&gt;</span><span class="v">…</span><span class="t">&lt;/div&gt;</span></div>
<div class="ln" style="left:252.5px;top:813.03px"><span class="t">&lt;/div&gt;</span></div>
<div class="ln" style="left:252.5px;top:832.61px"><span class="t">&lt;div</span><span class="n"> class</span><span class="t">="</span><span class="v">mstrmojo-summary-Label</span><span class="t">"</span><span class="t">&gt;&lt;/div&gt;</span></div>
<div class="ln" style="left:252.5px;top:852.17px"><span class="t">&lt;div</span><span class="n"> class</span><span class="t">="</span><span class="v">mstrmojo-VIDND-mask</span><span class="t">"</span><span class="t">&gt;&lt;/div&gt;</span></div>
<div class="ln" style="left:252.5px;top:871.75px"><span class="t">&lt;div</span><span class="n"> class</span><span class="t">="</span><span class="v">mstrmojo-VIPanel-handle splitter showSplitter mojo-theme-light h</span><span class="t">"</span><span class="n"> style</span><span class="t">="</span><span class="v">height: 1px; width: 153px; cursor: ns-resize;</span><span class="t">"</span><span class="t">&gt;&lt;/div&gt;</span></div>
<div class="ln" style="left:238.6px;top:891.31px"><span class="t">&lt;/div&gt;</span></div>
<!--/CODE-->
</div></div>
</body></html>
